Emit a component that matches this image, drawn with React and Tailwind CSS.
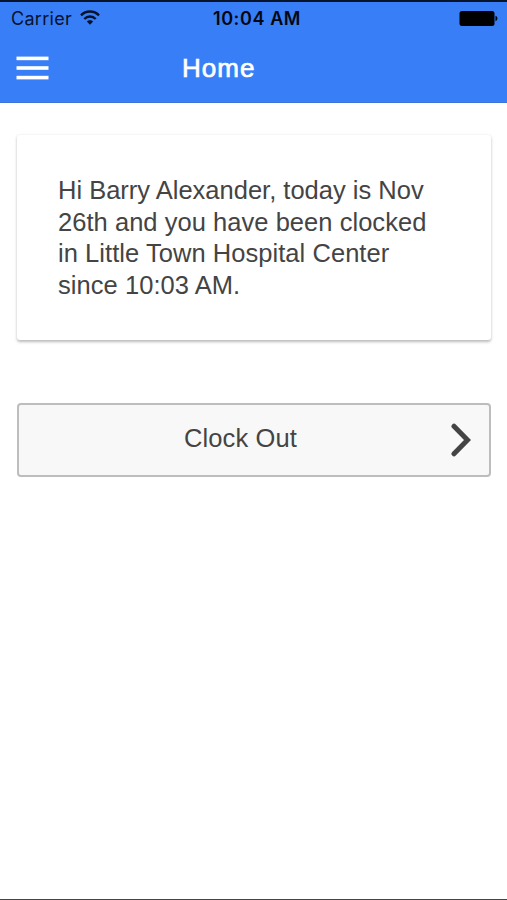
function WifiIcon() {
  return (
    <svg className="mb-[2px] h-[16px] w-[20px]" viewBox="0 0 20 16" fill="none" stroke="#06122b" strokeWidth="2.4">
      <path d="M1 5.300C6 .2 14 .2 19 5.300" />
      <path d="M4.300 9C7.500 5.600 12.500 5.600 15.700 9" />
      <path d="M10 14.800L6.800 11.500C8.500 9.700 11.500 9.700 13.200 11.500Z" fill="#06122b" stroke="none" />
    </svg>
  );
}

function BatteryIcon() {
  return (
    <svg className="h-[16px] w-[39px]" viewBox="0 0 39 16" fill="#000">
      <rect x="0.500" y="0" width="35" height="15" rx="2.500" />
      <path d="M36.500 4.800C39 5.500 39 9.500 36.500 10.200Z" />
    </svg>
  );
}

function MenuIcon() {
  return (
    <svg className="h-[24px] w-[33px]" viewBox="0 0 33 24" fill="#fff">
      <rect x="0.500" y="0.600" width="32" height="3.600" />
      <rect x="0.500" y="10.200" width="32" height="3.600" />
      <rect x="0.500" y="19.800" width="32" height="3.600" />
    </svg>
  );
}

function StatusBar() {
  return (
    <div className="grid h-[34px] grid-cols-3 items-center pr-[9px] pl-[11px] font-['Inter',sans-serif] text-[18px] leading-[34px] text-[#06122b]">
      <div className="flex items-center gap-[8px]">
        <span className="tracking-[0.3px]">Carrier</span>
        <WifiIcon />
      </div>
      <span className="pl-[5px] text-center font-semibold tracking-[0.600px] whitespace-nowrap text-[#020712]">
        10:04 AM
      </span>
      <div className="flex justify-end">
        <BatteryIcon />
      </div>
    </div>
  );
}

function Header() {
  return (
    <header className="h-[103px] border-t-2 border-b border-t-[#07132b] border-b-[#3a74dc] bg-[#387ef7]">
      <StatusBar />
      <div className="flex h-[64px] items-center">
        <button className="ml-[16px]" aria-label="Menu">
          <MenuIcon />
        </button>
        <h1 className="ml-[133px] text-[26px] leading-[32px] tracking-[1px] text-white [-webkit-text-stroke:0.7px_white]">
          Home
        </h1>
      </div>
    </header>
  );
}

export default function App() {
  return (
    <div className="flex h-[900px] w-[507px] flex-col border-b border-[#444] bg-white font-['Liberation_Sans',Arial,sans-serif] text-[#444]">
      <Header />
      <main className="flex flex-col pr-[16px] pl-[17px] pt-[32px]">
        <div className="h-[205px] rounded-[3px] bg-white px-[41px] pt-[40px] text-[25.500px] leading-[31.700px] shadow-[0_1.500px_3px_rgba(0,0,0,0.27)]">
          <p className="whitespace-nowrap">
            Hi Barry Alexander, today is Nov
            <br />
            <span className="tracking-[0.04px]">26th and you have been clocked</span>
            <br />
            <span className="tracking-[0.05px]">in Little Town Hospital Center</span>
            <br />
            <span className="tracking-[0.05px]">since 10:03 AM.</span>
          </p>
        </div>
        <button className="mt-[63px] flex h-[74px] items-center rounded-[4px] border-2 border-[#bdbdbd] bg-[#f8f8f8] pr-[17px] text-[25.500px]">
          <span className="flex-1 pb-[4px] pl-[12px] text-center tracking-[0.1px]">Clock Out</span>
          <svg className="h-[34px] w-[22px]" viewBox="0 0 22 34" fill="none" stroke="#444" strokeWidth="5">
            <path d="M4 3.200L17.500 17L4 30.800" strokeLinecap="round" />
          </svg>
        </button>
      </main>
    </div>
  );
}
